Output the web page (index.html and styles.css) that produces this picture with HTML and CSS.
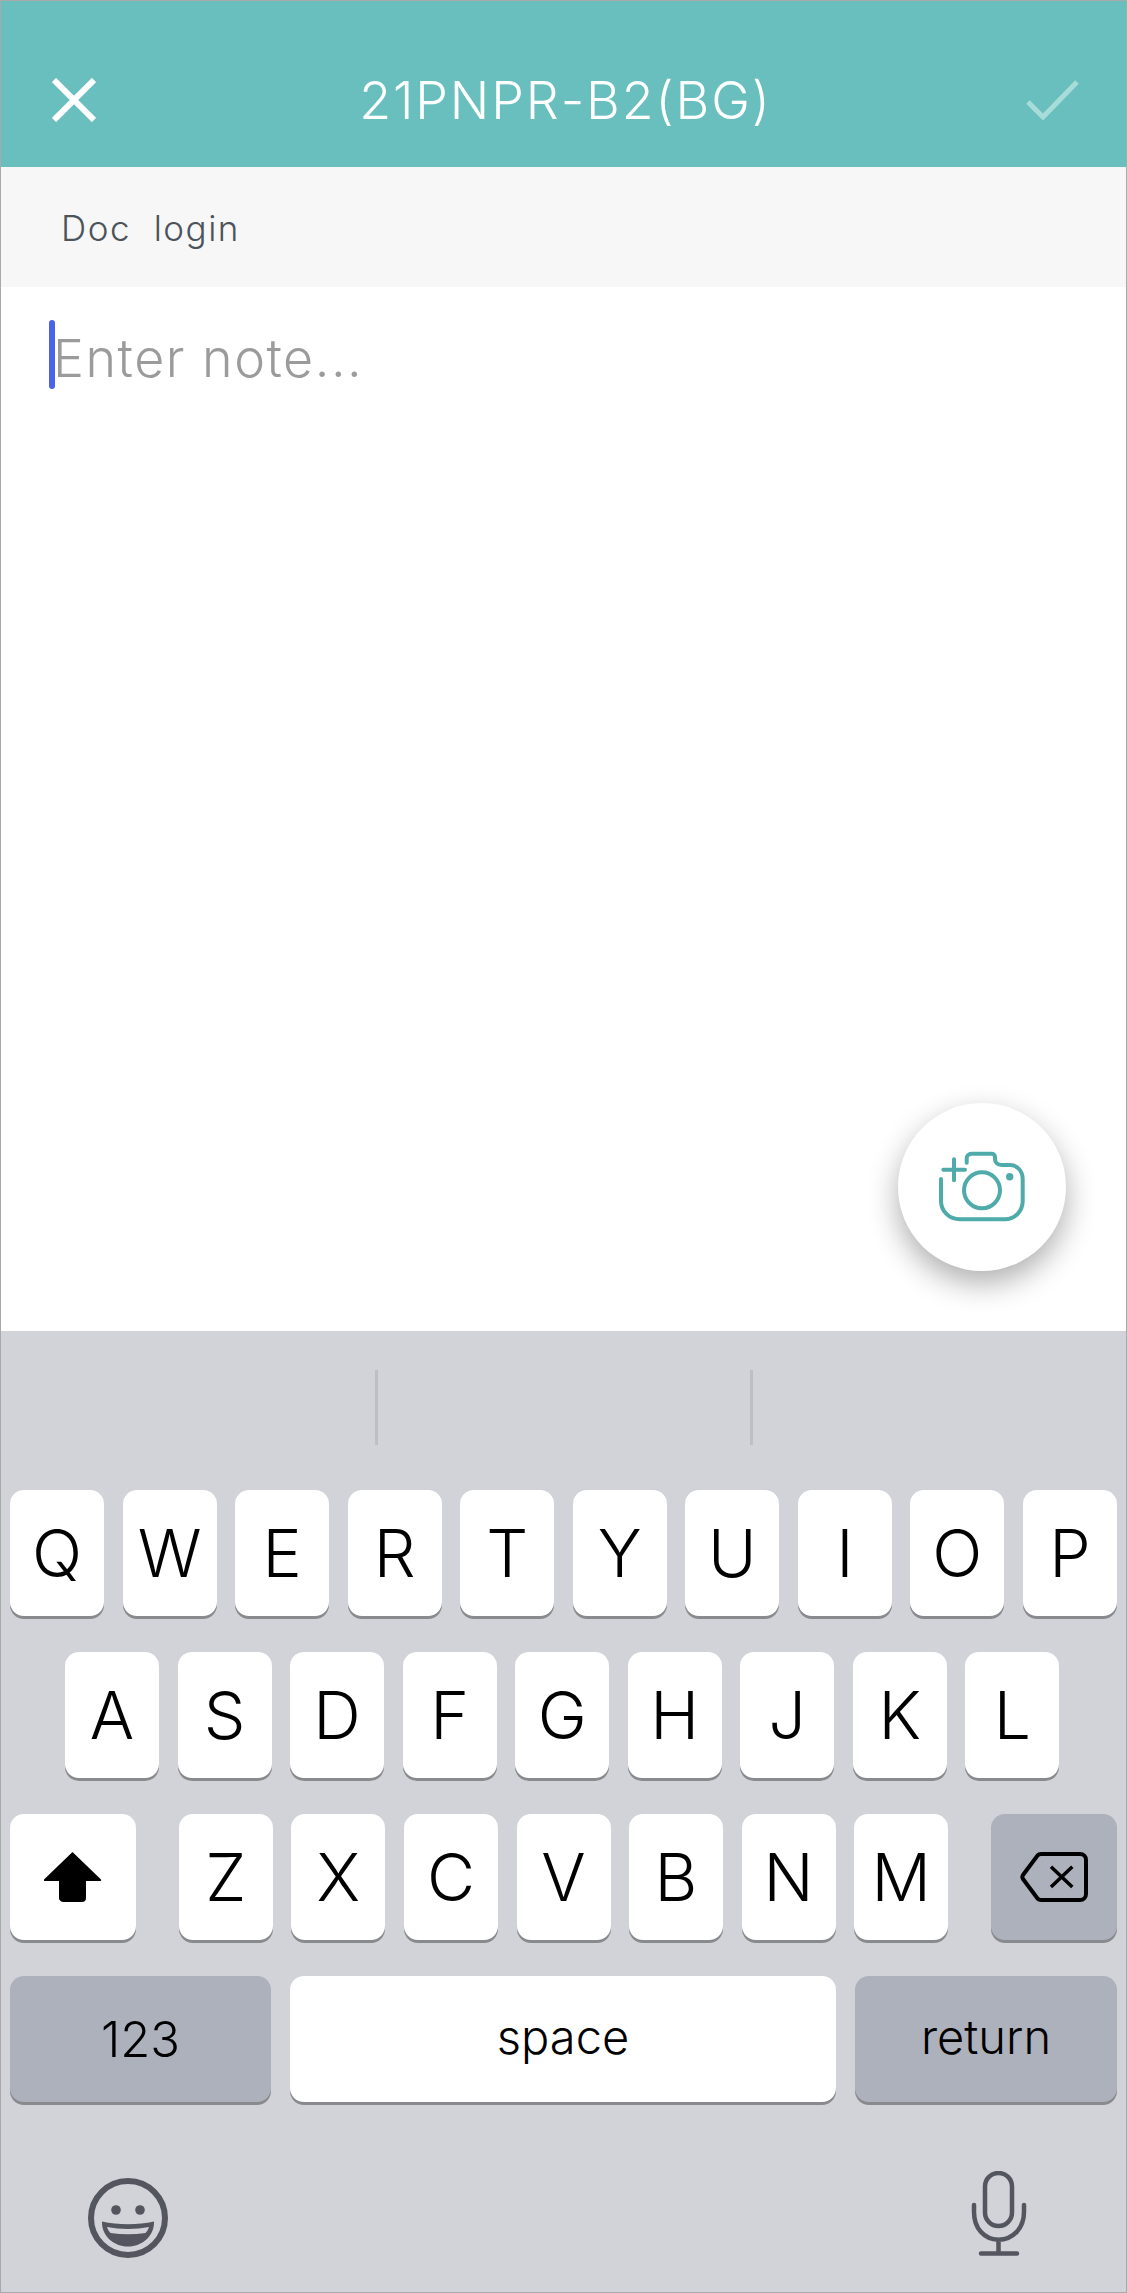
FILE: index.html
```html
<!DOCTYPE html>
<html lang="en">
<head>
    <meta charset="UTF-8">
    <meta name="viewport" content="width=device-width, initial-scale=1.0">
    <title>21PNPR-B2(BG)</title>
    <link rel="stylesheet" href="styles.css">
</head>
<body>
    <div class="screen">
        <header class="topbar">
            <svg class="icon-close" viewBox="0 0 44 44"><path d="M2 2 42 42M42 2 2 42"/></svg>
            <h1 class="title">21PNPR-B2(BG)</h1>
            <svg class="icon-check" viewBox="0 0 53 40"><path d="M2 22 17 37 51 2"/></svg>
        </header>

        <div class="subbar">Doc&nbsp; login</div>

        <div class="note">
            <span class="caret"></span>
            <span class="placeholder">Enter note...</span>
            <div class="fab">
                <svg class="icon-camera" viewBox="0 0 90 72">
                    <path d="M4 28V50C4 60 12 68.3 23 68.3H68C78 68.3 85.7 60 85.7 50V28C85.7 20 80 14 73 14H64.7C60 14 58 11 58 8V6C58 4 56 2.7 54.7 2.7H34.7C31.5 2.7 29.7 5 29.7 7.3V11.7"/>
                    <circle cx="45" cy="39.3" r="18"/>
                    <circle class="dot" cx="72.7" cy="25.7" r="3.7"/>
                    <path d="M6.3 18.7H28M17 8.3V29.3"/>
                </svg>
            </div>
        </div>

        <div class="keyboard">
            <div class="suggestions">
                <span class="divider"></span>
                <span class="divider"></span>
            </div>

            <div class="keys">
                <div class="row">
                    <div class="key">Q</div><div class="key">W</div><div class="key">E</div><div class="key">R</div><div class="key">T</div>
                    <div class="key">Y</div><div class="key">U</div><div class="key">I</div><div class="key">O</div><div class="key">P</div>
                </div>
                <div class="row row-middle">
                    <div class="key">A</div><div class="key">S</div><div class="key">D</div><div class="key">F</div><div class="key">G</div>
                    <div class="key">H</div><div class="key">J</div><div class="key">K</div><div class="key">L</div>
                </div>
                <div class="row row-shift">
                    <div class="key key-wide">
                        <svg class="icon-shift" viewBox="0 0 58 50"><path d="M28.5 0 57 27.5C57.500 28.500 57 29 56 29H42V46C42 48.500 40.500 50 38 50H20C17.500 50 15 48.500 15 46V29H1C0 29-.5 28.500 0 27.500Z"/></svg>
                    </div>
                    <div class="letters">
                        <div class="key">Z</div><div class="key">X</div><div class="key">C</div><div class="key">V</div>
                        <div class="key">B</div><div class="key">N</div><div class="key">M</div>
                    </div>
                    <div class="key key-wide key-dark">
                        <svg class="icon-delete" viewBox="0 0 68 50"><path d="M21 2H60C63.500 2 66 4.500 66 8V42C66 45.500 63.500 48 60 48H21C19.500 48 18.500 47.500 17.500 46.500L3 27C2 25.500 2 24.500 3 23L17.500 3.500C18.500 2.500 19.500 2 21 2Z"/><path class="thin" d="M31 14.700 52.300 35M52.300 14.700 31 35"/></svg>
                    </div>
                </div>
                <div class="row row-bottom">
                    <div class="key key-dark key-label key-numbers">123</div>
                    <div class="key key-label key-space">space</div>
                    <div class="key key-dark key-label key-return">return</div>
                </div>
            </div>

            <div class="keyboard-footer">
                <svg class="icon-emoji" viewBox="0 0 80 80">
                    <circle class="face" cx="40" cy="40" r="37"/>
                    <circle class="fill" cx="28" cy="32" r="4.800"/>
                    <circle class="fill" cx="52" cy="32" r="4.800"/>
                    <path class="fill" d="M14 43.500C30 47 50 47 66 43.500C66.500 58 54 68.500 40 68.500C26 68.500 13.500 58 14 43.500Z"/>
                    <path class="teeth" d="M19 49C32 51.500 48 51.500 61 49C60 52 59 53.500 57.500 55C46 56.800 34 56.800 22.500 55C21 53.500 20 52 19 49Z"/>
                </svg>
                <svg class="icon-mic" viewBox="0 0 56 85">
                    <rect x="14" y="2" width="27" height="53" rx="13.500"/>
                    <path d="M3 34V41C3 57 13 68.700 27.500 68.700C42 68.700 53 57 53 41V34M27.500 68.700V82M10 82.500H46"/>
                </svg>
            </div>
        </div>
    </div>
</body>
</html>
```

FILE: styles.css
```css
* {
    box-sizing: border-box;
}
body {
    margin: 0;
    font-family: "Inter", "Liberation Sans", sans-serif;
}
.screen {
    width: 1127px;
    height: 2293px;
    display: flex;
    flex-direction: column;
    border: 1px solid #a9a9a9;
    background-color: white;
    overflow: hidden;
}

/* top bar */
.topbar {
    height: 166px;
    flex-shrink: 0;
    padding: 32px 47px 0 51px;
    display: grid;
    grid-template-columns: 1fr auto 1fr;
    align-items: center;
    background-color: #68bfbd;
}
.title {
    margin: 0;
    color: white;
    font-size: 52px;
    font-weight: 300;
    letter-spacing: 1.9px;
    white-space: nowrap;
}
.icon-close {
    width: 44px;
    height: 44px;
    fill: none;
    stroke: white;
    stroke-width: 6;
}
.icon-check {
    width: 53px;
    height: 40px;
    justify-self: end;
    fill: none;
    stroke: #a8dcd9;
    stroke-width: 5;
}
.subbar {
    height: 120px;
    flex-shrink: 0;
    padding: 2px 0 0 60px;
    display: flex;
    align-items: center;
    background-color: #f7f7f7;
    color: #4c545a;
    font-size: 35px;
    font-weight: 300;
    letter-spacing: 1.5px;
}

/* note area */
.note {
    flex: 1;
    position: relative;
    padding: 33px 0 0 48px;
    display: flex;
    align-items: flex-start;
}
.caret {
    width: 6px;
    height: 69px;
    flex-shrink: 0;
    border-radius: 3px;
    background-color: #4a63ea;
}
.placeholder {
    margin-left: -2px;
    color: #9b9b9b;
    font-size: 52px;
    font-weight: 300;
    letter-spacing: 1.5px;
    line-height: 78px;
}
.fab {
    position: absolute;
    right: 60px;
    bottom: 60px;
    width: 168px;
    height: 168px;
    display: flex;
    align-items: center;
    justify-content: center;
    border-radius: 50%;
    background-color: white;
    box-shadow: 0 12px 30px rgba(0, 0, 0, 0.32);
}
.icon-camera {
    width: 90px;
    height: 72px;
    fill: none;
    stroke: #4fabaa;
    stroke-width: 4;
    stroke-linecap: round;
}
.icon-camera .dot {
    fill: #4fabaa;
    stroke: none;
}

/* keyboard */
.keyboard {
    height: 961px;
    flex-shrink: 0;
    background-color: #d1d3d9;
}
.suggestions {
    height: 159px;
    padding-top: 39px;
    display: flex;
    justify-content: center;
    gap: 372px;
}
.divider {
    width: 3px;
    height: 75px;
    background-color: #bdbfc6;
}
.keys {
    padding: 0 9px;
    display: flex;
    flex-direction: column;
    gap: 36px;
}
.row {
    display: flex;
    gap: 18.55px;
}
.row-middle {
    padding: 0 55px;
}
.row-shift {
    justify-content: space-between;
}
.letters {
    display: flex;
    gap: 18.55px;
}
.key {
    width: 94px;
    height: 126px;
    flex-shrink: 0;
    display: flex;
    align-items: center;
    justify-content: center;
    border-radius: 14px;
    background-color: white;
    box-shadow: 0 3px 0 #898a8d;
    color: black;
    font-size: 66px;
    font-weight: 300;
}
.key-wide {
    width: 126px;
}
.key-dark {
    background-color: #acb1bc;
}
.key-label {
    font-size: 47px;
    font-weight: 350;
}
.key-numbers {
    width: 261px;
    font-size: 49px;
}
.key-space {
    flex: 1;
    padding-bottom: 6px;
}
.key-return {
    width: 262px;
    padding-bottom: 6px;
}
.icon-shift {
    width: 58px;
    height: 50px;
    fill: black;
}
.icon-delete {
    width: 68px;
    height: 50px;
    fill: none;
    stroke: black;
    stroke-width: 4;
}
.icon-delete .thin {
    stroke-width: 3.500;
}
.keyboard-footer {
    padding: 68px 99px 0 87px;
    display: flex;
    justify-content: space-between;
    align-items: flex-start;
}
.icon-emoji {
    width: 80px;
    height: 80px;
    margin-top: 8px;
}
.icon-emoji .face {
    fill: none;
    stroke: #53565e;
    stroke-width: 6;
}
.icon-emoji .fill {
    fill: #53565e;
}
.icon-emoji .teeth {
    fill: #d1d3d9;
}
.icon-mic {
    width: 56px;
    height: 85px;
    margin-top: 1px;
    fill: none;
    stroke: #53565e;
    stroke-width: 4.500;
    stroke-linecap: round;
}
```
